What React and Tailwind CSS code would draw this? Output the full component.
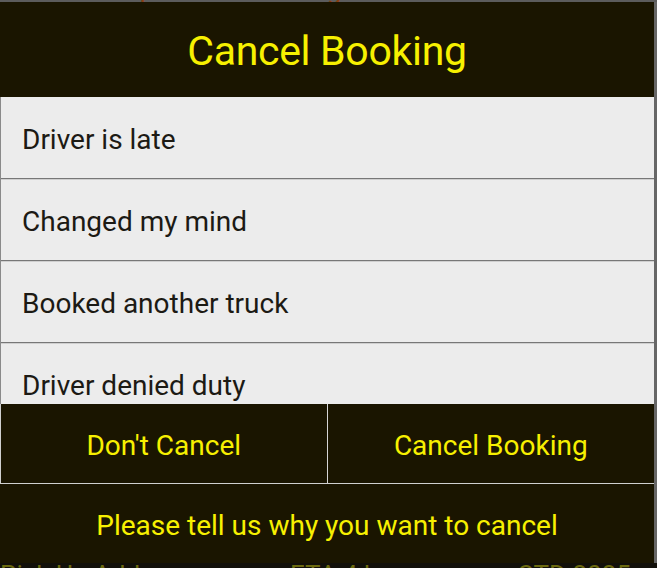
const reasons = ["Driver is late", "Changed my mind", "Booked another truck", "Driver denied duty"];

export default function App() {
  return (
    <div className="w-[657px] h-[568px] bg-[#5c5c5c] flex flex-col overflow-hidden" style={{ fontFamily: "Roboto, 'Noto Sans', sans-serif" }}>
      {/* page behind the dialog, mostly hidden */}
      <div className="h-[2px] overflow-hidden flex gap-[60px] pl-[75px]">
        <span className="-mt-[22px] text-[26px] leading-[24px] text-[#8a3e10]">Transport</span>
        <span className="-mt-[22px] text-[26px] leading-[24px] text-[#8a3e10]">Booking Details</span>
      </div>

      <div className="flex flex-1">
        <div className="w-[654px] flex flex-col">
          <div className="h-[95px] bg-[#1a1500] flex items-center justify-center pt-[4px]">
            <h1 className="text-[41px] text-[#f7f000] tracking-[-0.3px]">Cancel Booking</h1>
          </div>

          <div className="h-[307px] bg-[#ececec] overflow-hidden border-l border-[#8a8a8a] pt-px">
            {reasons.map((r) => (
              <div key={r} className="h-[82px] flex flex-col">
                <div className="flex-1 flex items-center pl-[21px] pt-[3px] text-[28px] text-[#1c1a14]">{r}</div>
                <div className="h-px bg-[#777]" />
                <div className="h-px bg-[#cfcfcf]" />
              </div>
            ))}
          </div>

          <div className="h-[79px] grid grid-cols-2 bg-[#1a1500] border-l border-[#cfcfcf]">
            <button className="border-r border-[#d5d5d5] text-[28px] text-[#f7f000] pt-[4px]">Don't Cancel</button>
            <button className="text-[28px] text-[#f7f000] pt-[4px]">Cancel Booking</button>
          </div>
          <div className="h-px bg-[#d0d0d0]" />
          <div className="h-[79px] bg-[#1a1500] flex items-center justify-center text-[28px] text-[#f7f000] pt-[4px]">
            Please tell us why you want to cancel
          </div>
        </div>
        <div className="flex-1 bg-[#666]" />
      </div>

      <div className="h-[5px] bg-[#12100a] overflow-hidden flex text-[26px] leading-[26px] text-[#6c6a10]">
        <span className="-mt-[1px] w-[290px]">Pick Up Address</span>
        <span className="-mt-[1px] w-[228px]">ETA 4 hrs</span>
        <span className="-mt-[1px]">STD 2025</span>
      </div>
    </div>
  );
}
